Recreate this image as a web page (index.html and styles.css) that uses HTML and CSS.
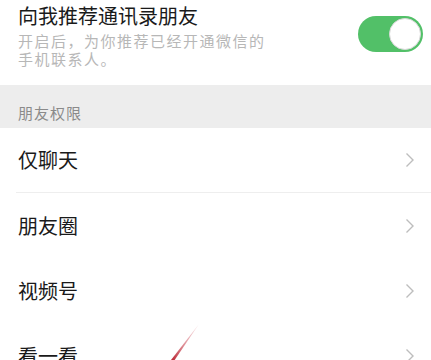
FILE: index.html
```html
<!DOCTYPE html>
<html lang="zh-CN">
<head>
<meta charset="utf-8">
<link rel="stylesheet" href="styles.css">
</head>
<body>
<div class="page">
  <section class="top">
    <div class="top-text">
      <div class="title">向我推荐通讯录朋友</div>
      <div class="desc">开启后，为你推荐已经开通微信的<br>手机联系人。</div>
    </div>
    <div class="toggle"><span class="knob"></span></div>
  </section>
  <div class="group-label">朋友权限</div>
  <ul class="list">
    <li class="row row-sep"><span class="row-text">仅聊天</span>
      <svg class="chev" width="10" height="16" viewBox="0 0 10 16"><path d="M1.5 1.5 L8 8 L1.5 14.5" fill="none" stroke="#bdbdbd" stroke-width="1.4"/></svg></li>
    <li class="row"><span class="row-text">朋友圈</span>
      <svg class="chev" width="10" height="16" viewBox="0 0 10 16"><path d="M1.5 1.5 L8 8 L1.5 14.5" fill="none" stroke="#bdbdbd" stroke-width="1.4"/></svg></li>
    <li class="row"><span class="row-text">视频号</span>
      <svg class="chev" width="10" height="16" viewBox="0 0 10 16"><path d="M1.5 1.5 L8 8 L1.5 14.5" fill="none" stroke="#bdbdbd" stroke-width="1.4"/></svg></li>
    <li class="row"><span class="row-text">看一看</span>
      <svg class="chev" width="10" height="16" viewBox="0 0 10 16"><path d="M1.5 1.5 L8 8 L1.5 14.5" fill="none" stroke="#bdbdbd" stroke-width="1.4"/></svg></li>
  </ul>
  <svg class="arrow" width="40" height="45" viewBox="0 0 40 45">
    <defs>
      <linearGradient id="rg" x1="1" y1="0" x2="0" y2="1">
        <stop offset="0" stop-color="#e9a0a8" stop-opacity="0.3"/>
        <stop offset="1" stop-color="#b8202e"/>
      </linearGradient>
    </defs>
    <path d="M34 4 L9 41 L6 40 Z" fill="url(#rg)"/>
  </svg>
</div>
</body>
</html>
```
FILE: styles.css
```css
html, body {
  margin: 0;
  padding: 0;
  background: #ffffff;
}
body {
  font-family: "Noto Sans CJK SC", "Noto Sans", sans-serif;
  overflow: hidden;
}
.page {
  position: relative;
  width: 431px;
  height: 360px;
  overflow: hidden;
}
.top {
  display: flex;
  justify-content: space-between;
  align-items: flex-start;
  height: 85px;
  padding: 4px 8px 0 18px;
  box-sizing: border-box;
}
.title {
  font-size: 20px;
  line-height: 24px;
  color: #1a1a1a;
}
.desc {
  margin-top: 4px;
  font-size: 15px;
  line-height: 18px;
  color: #b7b7b7;
  letter-spacing: 1.5px;
}
.toggle {
  margin-top: 12px;
  width: 65px;
  height: 36px;
  border-radius: 18px;
  background: #52c068;
  display: flex;
  justify-content: flex-end;
  align-items: center;
  padding: 0 2px;
  box-sizing: border-box;
}
.knob {
  width: 32px;
  height: 32px;
  border-radius: 50%;
  background: #ffffff;
  box-sizing: border-box;
  border: 1.5px solid #d8d8d8;
}
.group-label {
  height: 43px;
  box-sizing: border-box;
  padding: 18px 0 0 18px;
  background: #ededed;
  font-size: 15px;
  line-height: 20px;
  color: #8a8a8a;
  letter-spacing: 1px;
}
.list {
  list-style: none;
  margin: 0;
  padding: 0;
}
.row {
  display: flex;
  align-items: center;
  justify-content: space-between;
  height: 65px;
  padding: 0 16px 0 18px;
  box-sizing: border-box;
}
.row-sep {
  border-bottom: 1px solid #eeeeee;
  margin-left: 16px;
  padding-left: 2px;
}
.row-text {
  font-size: 20px;
  line-height: 24px;
  color: #1a1a1a;
}
.chev {
  display: block;
}
.arrow {
  position: absolute;
  left: 165px;
  top: 320px;
}
```
